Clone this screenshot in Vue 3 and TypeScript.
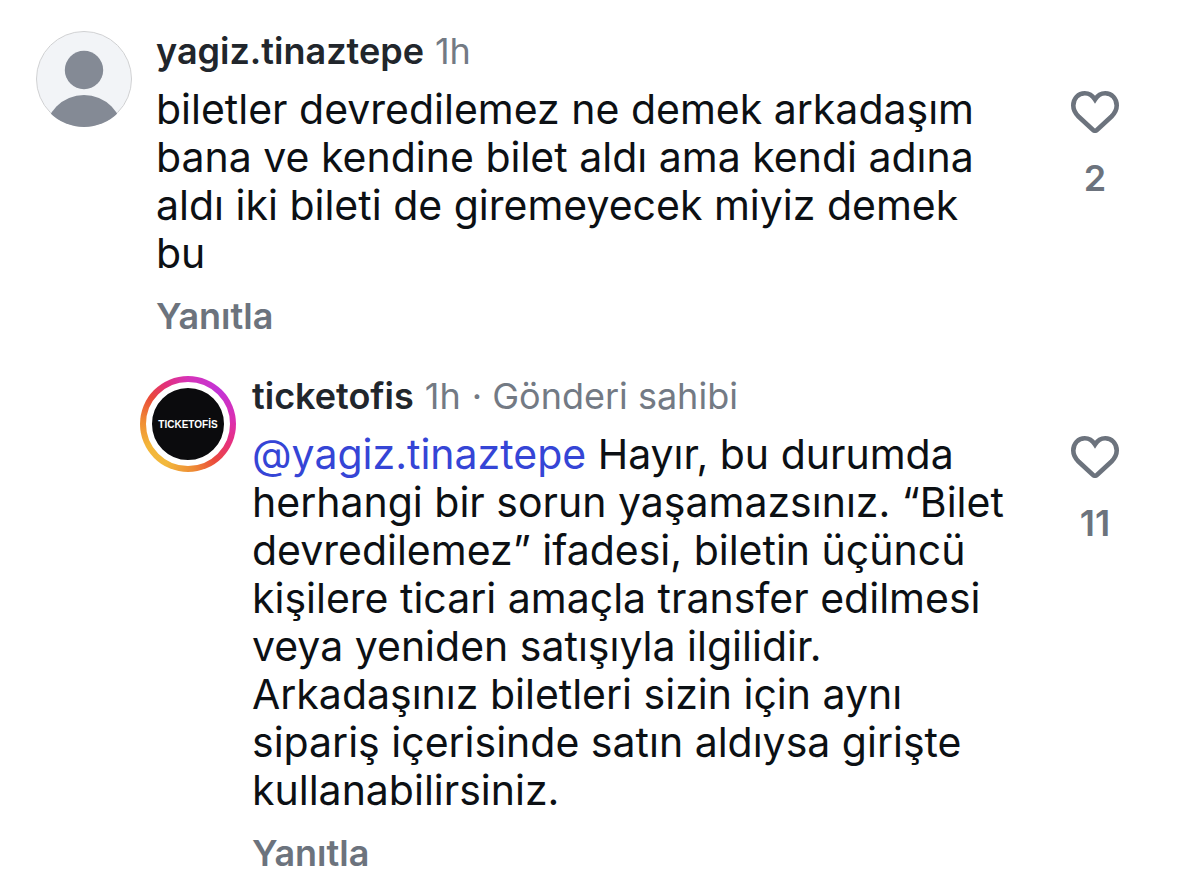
<script setup lang="ts">
interface Comment {
  id: string
  user: string
  time: string
  note?: string
  mention?: string
  lines: string[]
  likes: number
  reply: boolean
}

const comments: Comment[] = [
  {
    id: 'c1',
    user: 'yagiz.tinaztepe',
    time: '1h',
    lines: [
      'biletler devredilemez ne demek arkadaşım',
      'bana ve kendine bilet aldı ama kendi adına',
      'aldı iki bileti de giremeyecek miyiz demek',
      'bu',
    ],
    likes: 2,
    reply: false,
  },
  {
    id: 'c2',
    user: 'ticketofis',
    time: '1h',
    note: '· Gönderi sahibi',
    mention: '@yagiz.tinaztepe',
    lines: [
      'Hayır, bu durumda',
      'herhangi bir sorun yaşamazsınız. “Bilet',
      'devredilemez” ifadesi, biletin üçüncü',
      'kişilere ticari amaçla transfer edilmesi',
      'veya yeniden satışıyla ilgilidir.',
      'Arkadaşınız biletleri sizin için aynı',
      'sipariş içerisinde satın aldıysa girişte',
      'kullanabilirsiniz.',
    ],
    likes: 11,
    reply: true,
  },
]
</script>

<template>
  <main class="thread">
    <article v-for="c in comments" :key="c.id" class="comment" :class="{ nested: c.reply }">
      <div v-if="!c.reply" class="avatar">
        <svg viewBox="0 0 96 96" aria-hidden="true">
          <defs>
            <clipPath id="face"><circle cx="48" cy="48" r="48" /></clipPath>
          </defs>
          <circle cx="48" cy="48" r="47" fill="#f2f4f7" />
          <circle cx="48" cy="48" r="47.5" fill="none" stroke="#cfd0d2" />
          <g clip-path="url(#face)" fill="#848a95">
            <circle cx="48" cy="39" r="19.2" />
            <circle cx="48" cy="103" r="39" />
          </g>
        </svg>
      </div>
      <div v-else class="avatar ring">
        <div class="logo">TICKETOFİS</div>
      </div>
      <div class="body">
        <header class="meta">
          <strong>{{ c.user }}</strong>
          <span>{{ c.time }}</span>
          <span v-if="c.note">{{ c.note }}</span>
        </header>
        <p class="text">
          <template v-for="(line, i) in c.lines" :key="i">
            <br v-if="i > 0" /><template v-if="i === 0 && c.mention"><a href="#">{{ c.mention }}</a>{{ ' ' }}</template>{{ line }}
          </template>
        </p>
        <button type="button" class="answer">Yanıtla</button>
      </div>
      <button type="button" class="like">
        <svg viewBox="0 0 48 42" aria-hidden="true">
          <path d="M24 8.500C21.500 4.600 18 2.300 13.800 2.300C7.300 2.300 2.300 7.500 2.300 14.500C2.300 19 4.200 22.200 7.500 25.500L21.800 38.800Q24 40.700 26.200 38.800L40.500 25.500C43.800 22.200 45.700 19 45.700 14.500C45.700 7.500 40.700 2.300 34.200 2.300C30 2.300 26.500 4.600 24 8.500Z" />
        </svg>
        <span>{{ c.likes }}</span>
      </button>
    </article>
  </main>
</template>

<style>
body {
  margin: 0;
  background: #fff;
}
</style>

<style scoped>
.thread {
  display: flex;
  flex-direction: column;
  gap: 40px;
  padding: 31px 44px 0 36px;
  font-family: Inter, "Liberation Sans", sans-serif;
  color: #0c1014;
}
.comment {
  display: flex;
  align-items: flex-start;
}
.nested {
  padding-left: 104px;
}
.avatar {
  flex: none;
  box-sizing: border-box;
  width: 96px;
  height: 96px;
  margin-right: 24px;
}
.avatar svg {
  display: block;
  width: 100%;
}
.avatar.ring {
  margin-right: 16px;
  padding: 6px;
  border-radius: 50%;
  background: conic-gradient(#d633b8, #c233d6 12%, #dc2fae 24%, #e6307c 32%, #ea4a3c 40%, #ee8a34 48%, #f2b83c 58%, #f3b63a 67%, #f08c34 76%, #e9483a 85%, #e2307c 92%, #d633b8);
}
.logo {
  box-sizing: border-box;
  display: flex;
  align-items: center;
  justify-content: center;
  height: 100%;
  border: 6px solid #fff;
  border-radius: 50%;
  background: #0b0b0d;
  color: #fff;
  font-family: "Liberation Sans", sans-serif;
  font-size: 10px;
  font-weight: 700;
}
.body {
  flex: 1;
  min-width: 0;
}
.meta {
  display: flex;
  gap: 11px;
  line-height: 40px;
  font-size: 36px;
  color: #737a84;
  white-space: nowrap;
}
.meta strong {
  font-weight: 600;
  color: #21262c;
}
.text {
  margin: 14px 0 0;
  font-size: 41px;
  line-height: 48px;
  white-space: nowrap;
}
.text a {
  color: #3545d6;
  text-decoration: none;
}
button {
  padding: 0;
  border: 0;
  background: none;
  font-family: inherit;
  font-weight: 600;
  color: #6c737d;
  cursor: pointer;
}
.answer {
  display: block;
  margin-top: 19px;
  font-size: 36px;
  line-height: 40px;
}
.like {
  flex: none;
  display: flex;
  flex-direction: column;
  align-items: center;
  gap: 25px;
  width: 80px;
  margin-top: 60px;
  font-size: 36px;
  line-height: 40px;
}
.like svg {
  width: 48px;
  height: 42px;
  fill: none;
  stroke: #6c737d;
  stroke-width: 4.6;
  stroke-linejoin: miter;
}
</style>
